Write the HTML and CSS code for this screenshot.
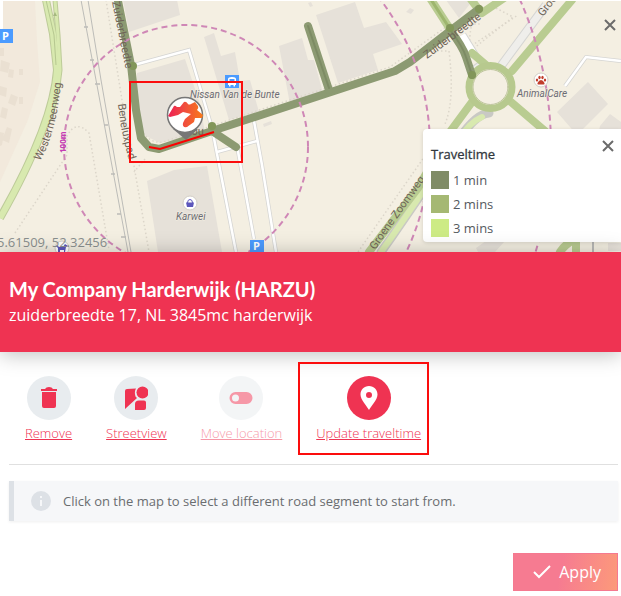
FILE: index.html
```html
<!DOCTYPE html>
<html lang="en">
<head>
<meta charset="utf-8">
<meta name="viewport" content="width=device-width, initial-scale=1">
<title>My Company Harderwijk</title>
<link rel="stylesheet" href="styles.css">
</head>
<body>
<section class="map" aria-label="Map">
  <svg class="map-canvas" viewBox="0 0 621 252" preserveAspectRatio="xMidYMid slice">
    <defs>
      <linearGradient id="brand" x1="0" x2="1"><stop offset="0" stop-color="#ee1f55"/><stop offset=".5" stop-color="#f0503c"/><stop offset="1" stop-color="#f97a1a"/></linearGradient>
      <path id="street-west" d="M40 161 Q57 133 62 74"/>
      <path id="street-benelux" d="M118 104 Q121 136 132 170"/>
      <path id="street-zuid" d="M112 2 L127 76"/>
      <path id="street-zuid2" d="M427 59 L490 12"/>
      <path id="street-groene" d="M375 250 Q399 216 433 168"/>
      <path id="street-groene2" d="M543 17 L570 -18"/>
    </defs>
    <rect width="621" height="252" fill="#f4efe2"/>
    <path d="M0 0H35L37 40 40 82 28 120 0 182Z" fill="#f2e9dc"/>
    <path d="M0 0H3V28L0 34Z" fill="#fff"/>
    <g fill="#eae0d2">
      <path d="M0 48h4v8H0zM1 60l9 3-2 10-8-2zM9 69l5 1-1 8-5-1zM19 69h4v6h-4zM0 86l7 2-1 9-6-2zM11 94l7 3-3 9-7-3zM2 107l6 2-2 10-6-2zM19 97h4v7h-4zM7 127l5 2-3 14-7-3zM0 132l4 1-2 12-2 1z"/>
    </g>
    <g fill="#e6e1d9">
      <path d="M123 0H177L180 15 129 32Z"/>
      <path d="M137 73 185 59 200 104 205 133 160 143 142 134 136 110Z"/>
      <path d="M147 181 174 170 207 166 222 252H158Z"/>
      <path d="M204 37 214 33 221 56 235 52 240 81 250 80 259 112 229 120Z"/>
      <path d="M279 46 302 38 308 60 314 60 323 93 290 104Z"/>
      <path d="M316 15 355 2 364 28 386 22 402 44 373 54 378 70 338 83Z"/>
      <path d="M308 3l3-1 2 4-3 1zM263 124l8-3 1 3-8 3zM406 12l4-4 4 2-3 4zM446 0h27l-14 18Z"/>
      <path d="M557 112 588 82 608 104 577 135ZM600 126 610 114 621 122V150H595Z"/>
      <path d="M476 248 497 233 505 241 495 252H478ZM608 243h13v8h-13z"/>
    </g>
    <g fill="none" stroke="#dcd6ca" stroke-width="1.5" stroke-dasharray="1.5 2.5">
      <path d="M106 0 122 100 134 166 149 252"/>
      <path d="M15 233 67 155V136Q76 119 89 133L109 250"/>
      <path d="M137 106 141 130Q150 144 163 142L390 67 450 24 482 24"/>
      <path d="M145 159 134 172"/>
      <path d="M465 50 518 15M421 51 449 51Q455 100 445 124"/>
      <path d="M472 23Q467 46 473 49L513 17 490 5"/>
      <path d="M358 252 383 216 427 153"/>
    </g>
    <g fill="none" stroke="#bcbcb8" stroke-width="1">
      <path d="M81 0 96 80 128 252M88 0 101 80 131 252"/>
      <path d="M84 27h4M90 60h4M95 84h5M104 125h4M111 174h4M117 214h4M121 237h5" stroke-width="1.5"/>
    </g>
    <g fill="none" stroke-linejoin="round">
      <path d="M46 0 53 34 57 70Q53 125 0 218" stroke="#bdcb99" stroke-width="8"/>
      <path d="M55 0 58 35 60 70Q57 102 47 124" stroke="#bdcb99" stroke-width="5"/>
      <path d="M46 0 53 34 57 70Q53 125 0 218" stroke="#d8e9af" stroke-width="6"/>
      <path d="M55 0 58 35 60 70Q57 102 47 124" stroke="#d8e9af" stroke-width="3"/>
      <path d="M46 0 54 35 56 65" stroke="#b6c790" stroke-width="1"/>
    </g>
    <path d="M53 16l2-4 2 4z" fill="#a5b880"/>
    <g fill="none" stroke="#d5d5d3" stroke-width="4">
      <path d="M134 65 189 50 212 128 236 252M254 121 262 165 276 252M217 152 257 141M237 146 254 239M621 61 586 57 565 86"/>
      <path d="M498 70 546 5M462 35 475 56M470 73 480 66" stroke-width="9"/>
    </g>
    <g fill="none" stroke="#fff" stroke-width="2.5">
      <path d="M134 65 189 50 212 128 236 252M254 121 262 165 276 252M217 152 257 141M237 146 254 239M621 61 586 57 565 86"/>
      <path d="M498 70 546 5M470 73 480 66" stroke="#efeeeb" stroke-width="7"/>
      <path d="M462 35 475 56" stroke-width="7"/>
    </g>
    <g fill="none" stroke-linecap="round">
      <path d="M489 113Q476 114 459 139L391 238 381 252" stroke="#c9c9c4" stroke-width="9"/>
      <path d="M482 117Q470 122 459 139L391 238 381 252" stroke="#d8e9af" stroke-width="6"/>
      <path d="M512 71 572 0M472 102 450 132 418 188 369 252M511 102 552 137M472 53 486 65M430 -2 450 29M470 -2 479 10M482 13 507 -4M560 252Q566 243 577 238M576 252V240" stroke="#b9cc91" stroke-width="8"/>
      <path d="M593 252V240" stroke="#b9b9b7" stroke-width="2"/>
      <circle cx="490.500" cy="87" r="21.500" stroke="#b7c98e" stroke-width="7"/>
      <circle cx="490.500" cy="87" r="17.500" stroke="#a6b37e" stroke-width=".7"/>
      <path d="M430 -2 450 29" stroke="#9eb66e" stroke-width="3"/>
    </g>
    <g fill="none" stroke="#8c9a72" stroke-width="8" stroke-linecap="round" stroke-linejoin="round">
      <path d="M117 -4 131 65 136 110 141 138 149 147 159 149 212 131 395 71 410 62 450 31 479 9"/>
      <path d="M450 30Q463 47 466 57L472 75M308 26 329 90M212 127V131L236 147"/>
      <path d="M308 26 329 88M451 31Q463 47 466 57L471 72" stroke="#7d8b64" stroke-width="2"/>
    </g>
    <g fill="#829659"><circle cx="450" cy="28" r="4"/><circle cx="479" cy="9" r="4"/><circle cx="472" cy="75" r="4"/><circle cx="133" cy="66" r="4"/><circle cx="212" cy="126" r="4"/></g>
    <g fill="none" stroke="#cf87b6" stroke-width="2" stroke-dasharray="6 4">
      <circle cx="186" cy="147" r="122"/><circle cx="186" cy="147" r="244"/><circle cx="186" cy="147" r="365"/>
    </g>
    <g class="street">
      <text><textPath href="#street-west">Westermeenweg</textPath></text>
      <text><textPath href="#street-benelux">Beneluxpad</textPath></text>
      <text><textPath href="#street-zuid">Zuiderbreedte</textPath></text>
      <text><textPath href="#street-zuid2">Zuiderbreedte</textPath></text>
      <text><textPath href="#street-groene">Groene Zoomweg</textPath></text>
      <text><textPath href="#street-groene2">Groe</textPath></text>
      <text x="185" y="135">Zou</text>
    </g>
    <text class="distance" transform="translate(66 153) rotate(-90)">100m</text>
    <g class="place">
      <text x="190" y="98">Nissan Van de Bunte</text>
      <text x="517" y="97">AnimalCare</text>
      <text x="176" y="220">Karwei</text>
    </g>
    <g fill="#4b9bff"><path d="M0 29H13V43H0zM225 75h14v13h-14zM250 240h14v12h-14z"/></g>
    <g class="parking"><text x="2" y="40">P</text><text x="253" y="250">P</text></g>
    <path d="M228 85V79q0-2 4-2t4 2v6h-1v1.500h-1.500V85h-3v1.500H229V85zM229.500 79v3h5v-3z" fill="#fff" fill-rule="evenodd"/>
    <g fill="#fff" stroke="#d2cec6"><circle cx="190" cy="203" r="7"/><circle cx="541" cy="80" r="7"/><circle cx="62" cy="248" r="7"/></g>
    <path d="M186 202.500h8l-1 4.500h-6z" fill="#5d57bc"/>
    <path d="M187.500 203q0-3.500 2.500-3.500t2.500 3.500" fill="none" stroke="#5d57bc"/>
    <path d="M58 252v-4l-2-2 1-1 2 2h4l2-3 3 2-2 1-1 5h-1v-2h-4v2z" fill="#5d57bc"/>
    <g fill="#c13e2c"><ellipse cx="537" cy="80" rx="1.200" ry="1.600"/><ellipse cx="539.500" cy="77.500" rx="1.200" ry="1.700"/><ellipse cx="542.500" cy="77.500" rx="1.200" ry="1.700"/><ellipse cx="545" cy="80" rx="1.200" ry="1.600"/><path d="M541 80q2 0 3.500 3 .5 2-1.500 1.500h-4q-2 .5-1.500-1.500 1.500-3 3.500-3z"/></g>
    <path d="M173 129 186 140 198 129Z" fill="#777"/>
    <circle cx="185" cy="115" r="17.500" fill="#fff" stroke="#777" stroke-width="1.500"/>
    <path d="M168 116 174 106Q175 105 177 107L180 107 184 102Q186 101 188 104 189 105 191 104L195 102 198 106Q199 108 197 110L203 115 202 118 195 118 194 122 187 127Q182 128 183 123L185 119 191 114 183 112 178 115 170 117Z" fill="url(#brand)"/>
    <path d="M149 147 160 149 214 132" fill="none" stroke="#fb0000" stroke-width="2"/>
    <rect x="130" y="82" width="112" height="80" fill="none" stroke="#fb0d0d" stroke-width="2"/>
    <path d="M0 .5H621" stroke="#fff"/>
  </svg>
  <output class="coordinates">5.61509, 52.32456</output>
  <button class="close close-map" aria-label="Close"><svg viewBox="0 0 12 12"><path d="M1 1 11 11M11 1 1 11"/></svg></button>
  <aside class="legend">
    <button class="close close-legend" aria-label="Close legend"><svg viewBox="0 0 12 12"><path d="M1 1 11 11M11 1 1 11"/></svg></button>
    <h2>Traveltime</h2>
    <ul>
      <li><span class="swatch near"></span>1 min</li>
      <li><span class="swatch mid"></span>2 mins</li>
      <li><span class="swatch far"></span>3 mins</li>
    </ul>
  </aside>
</section>
<header class="location">
  <h1>My Company Harderwijk (HARZU)</h1>
  <p>zuiderbreedte 17, NL 3845mc harderwijk</p>
</header>
<main>
  <nav class="actions" aria-label="Location actions">
    <button class="action"><span class="disc"><svg viewBox="0 0 24 24"><path d="M4 3h4q1-2 4-2t4 2h4v2H4zM5 6h14v14q0 2-2 2H7q-2 0-2-2z"/></svg></span><span class="caption">Remove</span></button>
    <button class="action"><span class="disc"><svg viewBox="0 0 24 24"><path d="M12 2.500Q10 6 11.500 10.500L13 12 1 23V5Q1 3 3 3ZM11 24V18q0-3.500 4-3.500h5q2 0 2 2V22q0 2-2 2z"/><circle cx="18.500" cy="6.500" r="6"/></svg></span><span class="caption">Streetview</span></button>
    <button class="action" disabled><span class="disc"><svg viewBox="0 0 24 24"><path d="M6.500 6h11a6 6 0 0 1 0 12h-11a6 6 0 0 1 0-12zM6.500 8.500a3.500 3.500 0 1 0 0 7 3.500 3.500 0 1 0 0-7z" fill-rule="evenodd"/></svg></span><span class="caption">Move location</span></button>
    <button class="action selected"><span class="disc"><svg viewBox="0 0 24 24"><path d="M12 0C7 0 3.500 4 3.500 8.500 3.500 14 10 20 12 24c2-4 8.500-10 8.500-15.500C20.500 4 17 0 12 0zm0 6a3 3 0 1 1 0 6 3 3 0 1 1 0-6z" fill-rule="evenodd"/></svg></span><span class="caption">Update traveltime</span></button>
  </nav>
  <div class="notice">
    <svg class="info" viewBox="0 0 20 20"><circle cx="10" cy="10" r="10"/><path d="M9 5h2v2H9zM9 9h2v6H9z"/></svg>
    <p>Click on the map to select a different road segment to start from.</p>
  </div>
  <div class="footer">
    <button class="apply"><svg viewBox="0 0 18 14"><path d="M1 7 6 12 17 1"/></svg>Apply</button>
  </div>
</main>
</body>
</html>
```
FILE: styles.css
```css
* { box-sizing: border-box; }
body { margin: 0; background: #fff; color: #32383e; font-family: "Open Sans", sans-serif; font-size: 13px; overflow-x: hidden; }
h1, h2, p, ul { margin: 0; padding: 0; }
button { font: inherit; border: 0; background: none; padding: 0; cursor: pointer; }

.map { position: relative; height: 252px; overflow: hidden; }
.map-canvas { display: block; width: 100%; height: 100%; }
.street { font: 11px Roboto, sans-serif; fill: #6f6457; }
.place { font: italic 10px Roboto, sans-serif; fill: #6c6c74; stroke: #f4efe2; stroke-width: 1px; paint-order: stroke; }
.parking { font: bold 11px "Open Sans", sans-serif; fill: #fff; }
.distance { font: bold 8px "Open Sans", sans-serif; fill: #c43cb4; }
.coordinates { position: absolute; left: -3px; bottom: 0; font-size: 13px; line-height: 20px; color: #8a8f8f; }

.close { position: absolute; width: 12px; height: 12px; }
.close svg { display: block; width: 100%; fill: none; stroke: #6b6b6b; stroke-width: 2; }
.close-map { top: 19px; right: 5px; }
.close-legend { top: 11px; right: 7px; }
.legend { position: absolute; top: 129px; right: 0; width: 198px; padding: 15px 8px 2px; border-radius: 4px 0 0 4px; background: #fff; box-shadow: 0 1px 4px #0002; }
.legend h2 { font-size: 13px; font-weight: 400; line-height: 20px; margin-bottom: 4px; -webkit-text-stroke: 0.3px; }
.legend ul { list-style: none; }
.legend li { display: flex; align-items: center; gap: 4px; height: 24px; color: #555a60; }
.swatch { width: 18px; height: 18px; }
.near { background: #808c66; }
.mid { background: #a5b873; }
.far { background: #cdeb85; }

.location { position: relative; padding: 23px 9px 25px; background: #ef3352; color: #fff; box-shadow: 0 2px 20px #0004; }
.location h1 { font-family: Lato, sans-serif; font-size: 20px; font-weight: 700; line-height: 28px; }
.location p { font-size: 16px; line-height: 24px; }

main { padding: 0 3px 5px 9px; }
.actions { display: flex; gap: 34px; padding: 24px 16px 21px; border-bottom: 1px solid #e0e0e0; }
.action { position: relative; display: flex; flex-direction: column; align-items: center; gap: 3px; color: #ef3352; }
.disc { display: grid; place-items: center; width: 44px; height: 44px; border-radius: 50%; background: #e8ecef; }
.disc svg { width: 24px; height: 24px; fill: currentColor; }
.caption { font-size: 13px; font-weight: 300; line-height: 20px; text-decoration: underline; }
.action:disabled { opacity: .5; cursor: default; }
.selected .disc { background: #ef3352; color: #fff; }
.selected::after { content: ""; position: absolute; inset: -14px -8px -12px -18px; border: 2px solid #fb0d0d; }

.notice { display: flex; align-items: center; gap: 12px; margin-top: 16px; padding: 10px 17px; border-left: 5px solid #dde1e6; background: #f6f7f9; color: #6a6d70; box-shadow: 0 1px 3px #0001; }
.notice p { line-height: 20px; }
.info { width: 20px; height: 20px; fill: #dde1e6; }
.info path { fill: #f6f7f9; }
.footer { display: flex; justify-content: flex-end; margin-top: 32px; }
.apply { display: flex; align-items: center; gap: 8px; height: 38px; padding: 0 16px 0 19px; border: 1px solid #f57990; background: linear-gradient(100deg, #f67b91 45%, #fc9a7a); color: #fff; font-size: 16px; }
.apply svg { width: 18px; height: 14px; fill: none; stroke: #fff; stroke-width: 2; }
```
